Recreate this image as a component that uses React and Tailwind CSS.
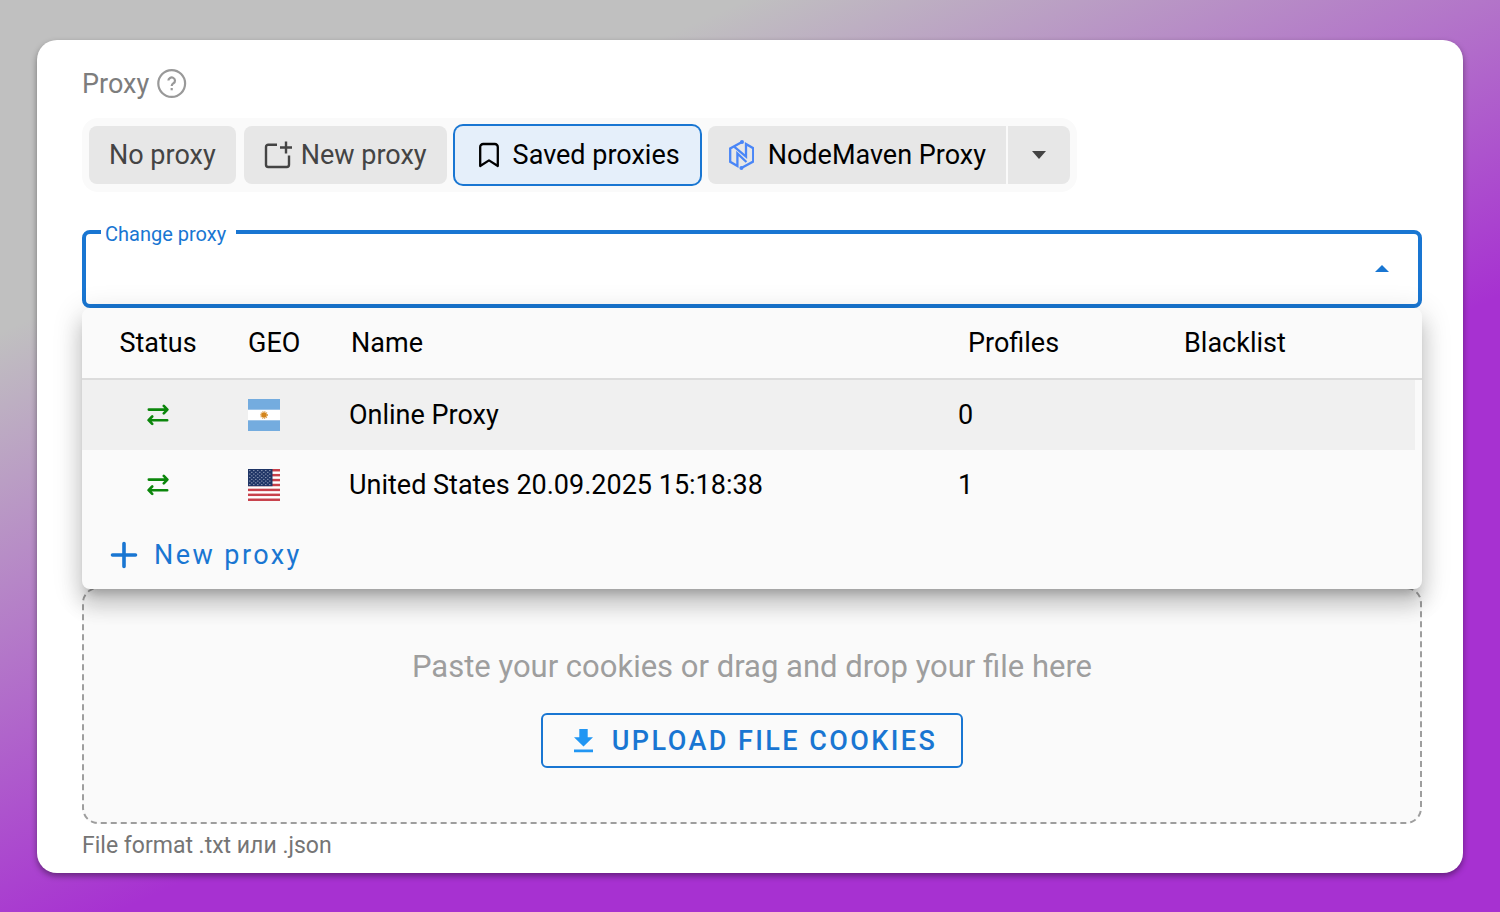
import React, { useState } from "react";

const proxies = [
  { id: 1, geo: "ar", name: "Online Proxy", profiles: 0 },
  { id: 2, geo: "us", name: "United States 20.09.2025 15:18:38", profiles: 1 },
];

const HelpIcon = () => (
  <svg className="size-[30px]" viewBox="0 0 30 30" fill="none" stroke="currentColor" strokeWidth="2.2">
    <circle cx="14.7" cy="14.5" r="13.4" />
    <path d="M11.4 11.6a3.3 3.1 0 1 1 5.1 2.6c-1.2.8-1.8 1.4-1.8 2.9" />
    <path d="M14.7 19v2.3" />
  </svg>
);

const NewTabIcon = () => (
  <svg className="w-7 h-[30px]" viewBox="0 0 28 30" fill="none" stroke="currentColor" strokeWidth="2.4">
    <path d="M13 4.8H4.2a2.2 2.2 0 0 0-2.2 2.2v17.8a2.2 2.2 0 0 0 2.2 2.2h18.6a2.2 2.2 0 0 0 2.2-2.2V15.5" />
    <path d="M22 1.5v12M16 7.5h12" />
  </svg>
);

const BookmarkIcon = () => (
  <svg className="w-[26px] h-[26px]" viewBox="-3 0 26 26" fill="none" stroke="currentColor" strokeWidth="2.3" strokeLinejoin="round">
    <path d="M2.2 5a3 3 0 0 1 3-3h11.6a3 3 0 0 1 3 3V24L11 18.4 2.2 24z" />
  </svg>
);

const NodeMavenIcon = () => (
  <svg className="w-[26px] h-[30px]" viewBox="-1 0 26 30" fill="none" stroke="#4a86f7" strokeWidth="2.3">
    <path d="M13 1.9 1.2 8.4v13.4l7.2 4.2V13.4l9 8.6" />
    <path d="M12.4 28.1l11.8-6.5V8.2L17 4v12.6L5.4 6.8" />
    <circle cx="13" cy="2" r="2" fill="#4a86f7" stroke="none" />
    <circle cx="12.4" cy="28" r="2" fill="#4a86f7" stroke="none" />
  </svg>
);

const SwapIcon = () => (
  <svg className="block mx-auto size-[22px]" viewBox="0 0 22 22" fill="none" stroke="#0b860b" strokeWidth="2.6" strokeLinecap="round" strokeLinejoin="round">
    <path d="M1.8 5.6h18M16.8 1.9l3.6 3.7-3.6 3.7" />
    <path d="M20.2 16.2h-18M5.2 12.5l-3.6 3.7 3.6 3.7" />
  </svg>
);

const DownloadIcon = () => (
  <svg className="w-[21px] h-6" viewBox="0 0 21 24" fill="#2196f3">
    <path d="M6.3 0h8.4v8.2h5.3L10.5 17.6 1 8.2h5.3zM1 20.6h19v2.7H1z" />
  </svg>
);

const ArgentinaFlag = () => (
  <svg className="size-8" viewBox="0 0 32 32" role="img" aria-label="Argentina">
    <path fill="#74acdf" d="M0 0h32v32H0z" />
    <path fill="#fff" d="M0 10.7h32v10.6H0z" />
    <circle cx="16" cy="16" r="3.4" fill="none" stroke="#dfa24f" strokeWidth="1.2" strokeDasharray="1 1" />
    <circle cx="16" cy="16" r="2.8" fill="#d3851c" />
  </svg>
);

const UsaFlag = () => (
  <svg className="size-8" viewBox="0 0 32 32" role="img" aria-label="United States">
    <path fill="#fff" d="M0 0h32v32H0z" />
    {[0, 1, 2, 3, 4, 5, 6].map((i) => (
      <rect key={i} y={i * 4.92} width="32" height="2.46" fill="#c8414b" />
    ))}
    <path fill="#1f3566" d="M0 0h24.5v17.2H0z" />
    {[0, 1, 2, 3, 4, 5, 6, 7, 8].map((row) => (
      <path
        key={row}
        d={`M${row % 2 ? 3.2 : 1.2} ${1.6 + row * 1.75}h${row % 2 ? 19 : 22}`}
        stroke="#c5cbdc"
        strokeWidth="0.8"
        strokeDasharray="1.2 2.8"
      />
    ))}
  </svg>
);

const flags = { ar: ArgentinaFlag, us: UsaFlag };

const App = () => {
  const [mode, setMode] = useState("saved");
  const [active, setActive] = useState(1);

  const tab = "flex items-center h-[58px] px-5 rounded-lg cursor-pointer";
  const tabColor = (name, color) =>
    mode === name ? "bg-[#e5effa] text-black ring-2 ring-[#1976d2]" : `bg-[#e7e7e7] ${color}`;

  return (
    <div
      className="min-h-screen px-[37px] py-10 text-[27px] leading-8 text-black"
      style={{
        fontFamily: 'Roboto, "Liberation Sans", sans-serif',
        background: "linear-gradient(156deg, #c0c0c0 21%, #a731d1 61%)",
      }}
    >
      <main className="bg-white rounded-[20px] pl-[45px] pr-[41px] pt-7 pb-[11px] shadow-[0_3px_6px_rgba(0,0,0,0.4)]">
        <h2 className="flex items-center gap-2 text-[#7d7d7d]">
          Proxy
          <button type="button" aria-label="Help" className="text-[#999] cursor-pointer">
            <HelpIcon />
          </button>
        </h2>

        {/* Proxy mode */}
        <div className="mt-[18px] w-fit flex items-center gap-2 px-[7px] py-2 rounded-2xl bg-[#fafafa]">
          <button type="button" onClick={() => setMode("none")} className={`${tab} ${tabColor("none", "text-[#444]")}`}>
            No proxy
          </button>
          <button type="button" onClick={() => setMode("new")} className={`${tab} gap-[9px] ${tabColor("new", "text-[#444]")}`}>
            <NewTabIcon />
            New proxy
          </button>
          <button type="button" onClick={() => setMode("saved")} className={`${tab} gap-3 ${tabColor("saved", "text-black")}`}>
            <BookmarkIcon />
            Saved proxies
          </button>
          <div className="flex gap-0.5">
            <button type="button" onClick={() => setMode("nodemaven")} className={`${tab} gap-[14px] rounded-r-none ${tabColor("nodemaven", "text-black")}`}>
              <NodeMavenIcon />
              NodeMaven Proxy
            </button>
            <button type="button" aria-label="More providers" className="flex items-center justify-center w-[62px] rounded-r-lg bg-[#e7e7e7] cursor-pointer">
              <svg className="w-[14px] h-2" viewBox="0 0 14 8" fill="#444">
                <path d="M0 0h14L7 8z" />
              </svg>
            </button>
          </div>
        </div>

        {/* Proxy select */}
        <fieldset className="mt-[26px] h-[90px] border-4 border-[#1976d2] rounded-lg px-[15px] min-w-0">
          <legend className="pt-1 pl-1 pr-[10px] text-[20px] leading-6 text-[#1976d2]">
            <label htmlFor="proxy">Change proxy</label>
          </legend>
          <div className="flex items-center h-11">
            <input id="proxy" type="text" className="flex-1 min-w-0 px-2 outline-none" />
            <button type="button" aria-label="Close list" className="px-[14px] py-3 cursor-pointer">
              <svg className="w-[14px] h-[7px]" viewBox="0 0 14 7" fill="#1976d2">
                <path d="M0 7h14L7 0z" />
              </svg>
            </button>
          </div>
        </fieldset>

        {/* Proxy list */}
        <div className="relative z-10 rounded-lg bg-[#fafafa] shadow-[0_10px_10px_-6px_rgba(0,0,0,0.2),0_16px_20px_2px_rgba(0,0,0,0.14),0_6px_28px_4px_rgba(0,0,0,0.12)]">
          <table className="w-full table-fixed border-separate border-spacing-0 text-left">
            <thead>
              <tr className="h-[72px]">
                <th className="w-[152px] font-normal text-center border-b-2 border-[#dcdcdc]">Status</th>
                <th className="w-[101px] pl-[14px] font-normal border-b-2 border-[#dcdcdc]">GEO</th>
                <th className="pl-4 font-normal border-b-2 border-[#dcdcdc]">Name</th>
                <th className="w-[216px] pl-5 font-normal border-b-2 border-[#dcdcdc]">Profiles</th>
                <th className="w-[258px] pl-5 font-normal border-b-2 border-[#dcdcdc]">Blacklist</th>
              </tr>
            </thead>
            <tbody>
              {proxies.map((proxy) => {
                const Flag = flags[proxy.geo];
                return (
                  <tr
                    key={proxy.id}
                    onMouseEnter={() => setActive(proxy.id)}
                    className={`h-[70px] cursor-pointer ${active === proxy.id ? "*:bg-[#f0f0f0]" : ""}`}
                  >
                    <td>
                      <SwapIcon />
                    </td>
                    <td className="pl-[14px]">
                      <Flag />
                    </td>
                    <td className="pl-[14px]">{proxy.name}</td>
                    <td className="pl-[10px]">{proxy.profiles}</td>
                    <td className="border-r-[7px] border-[#fafafa]"></td>
                  </tr>
                );
              })}
            </tbody>
          </table>
          <button type="button" className="flex items-center gap-4 w-full h-[69px] px-7 text-[#1976d2] tracking-[0.09em] cursor-pointer">
            <svg className="w-7 h-7" viewBox="0 0 28 28" fill="none" stroke="currentColor" strokeWidth="3.6" strokeLinecap="round">
              <path d="M14 2.5v23M2.5 14h23" />
            </svg>
            New proxy
          </button>
        </div>

        {/* Cookies */}
        <div className="-mt-0.5 flex flex-col items-center gap-7 pt-[60px] pb-[54px] rounded-2xl border-2 border-dashed border-[#9e9e9e] bg-[#fafafa]">
          <p className="text-[31px] leading-9 text-[#9e9e9e]">Paste your cookies or drag and drop your file here</p>
          <button type="button" className="flex items-center gap-[18px] h-[55px] pl-[30px] pr-6 rounded-md border-2 border-[#1976d2] font-medium text-[#1976d2] tracking-[0.09em] cursor-pointer">
            <DownloadIcon />
            UPLOAD FILE COOKIES
          </button>
        </div>
        <p className="mt-1.5 text-[23px] text-[#757575]">File format .txt или .json</p>
      </main>
    </div>
  );
};

export default App;
